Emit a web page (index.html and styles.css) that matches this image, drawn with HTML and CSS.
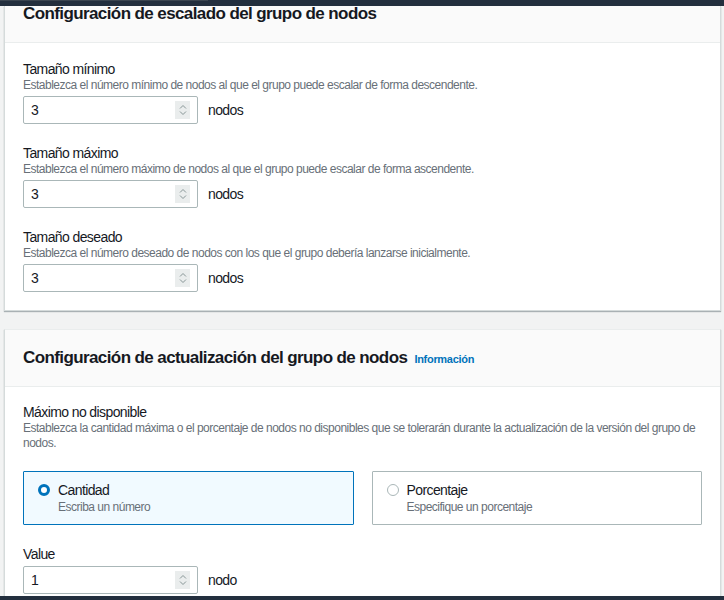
FILE: index.html
```html
<!DOCTYPE html>
<html lang="es">
<head>
<meta charset="utf-8">
<link rel="stylesheet" href="styles.css">
</head>
<body>
<div class="topbar"><div class="topbar-left"></div></div>
<main class="page">
  <section class="panel panel-first">
    <header class="panel-header">
      <h2 class="panel-title">Configuración de escalado del grupo de nodos</h2>
    </header>
    <div class="panel-body">
      <div class="field">
        <div class="label">Tamaño mínimo</div>
        <div class="desc">Establezca el número mínimo de nodos al que el grupo puede escalar de forma descendente.</div>
        <div class="input-row">
          <div class="input"><span class="value">3</span><span class="spinner"><svg width="8" height="12" viewBox="0 0 8 12"><path d="M1 4.5 L4 1.5 L7 4.5 M1 7.5 L4 10.5 L7 7.5" fill="none" stroke="#879596" stroke-width="1"/></svg></span></div>
          <span class="unit">nodos</span>
        </div>
      </div>
      <div class="field">
        <div class="label">Tamaño máximo</div>
        <div class="desc">Establezca el número máximo de nodos al que el grupo puede escalar de forma ascendente.</div>
        <div class="input-row">
          <div class="input"><span class="value">3</span><span class="spinner"><svg width="8" height="12" viewBox="0 0 8 12"><path d="M1 4.5 L4 1.5 L7 4.5 M1 7.5 L4 10.5 L7 7.5" fill="none" stroke="#879596" stroke-width="1"/></svg></span></div>
          <span class="unit">nodos</span>
        </div>
      </div>
      <div class="field">
        <div class="label">Tamaño deseado</div>
        <div class="desc">Establezca el número deseado de nodos con los que el grupo debería lanzarse inicialmente.</div>
        <div class="input-row">
          <div class="input"><span class="value">3</span><span class="spinner"><svg width="8" height="12" viewBox="0 0 8 12"><path d="M1 4.5 L4 1.5 L7 4.5 M1 7.5 L4 10.5 L7 7.5" fill="none" stroke="#879596" stroke-width="1"/></svg></span></div>
          <span class="unit">nodos</span>
        </div>
      </div>
    </div>
  </section>

  <section class="panel panel-second">
    <header class="panel-header tall">
      <h2 class="panel-title">Configuración de actualización del grupo de nodos <a class="info" href="#">Información</a></h2>
    </header>
    <div class="panel-body">
      <div class="field">
        <div class="label">Máximo no disponible</div>
        <div class="desc">Establezca la cantidad máxima o el porcentaje de nodos no disponibles que se tolerarán durante la actualización de la versión del grupo de nodos.</div>
      </div>
      <div class="tiles">
        <div class="tile selected">
          <span class="radio checked"></span>
          <div class="tile-text">
            <div class="tile-label">Cantidad</div>
            <div class="tile-desc">Escriba un número</div>
          </div>
        </div>
        <div class="tile">
          <span class="radio"></span>
          <div class="tile-text">
            <div class="tile-label">Porcentaje</div>
            <div class="tile-desc">Especifique un porcentaje</div>
          </div>
        </div>
      </div>
      <div class="field">
        <div class="label">Value</div>
        <div class="input-row">
          <div class="input"><span class="value">1</span><span class="spinner"><svg width="8" height="12" viewBox="0 0 8 12"><path d="M1 4.5 L4 1.5 L7 4.5 M1 7.5 L4 10.5 L7 7.5" fill="none" stroke="#879596" stroke-width="1"/></svg></span></div>
          <span class="unit">nodo</span>
        </div>
      </div>
    </div>
  </section>
</main>
<div class="bottombar"></div>
</body>
</html>
```

FILE: styles.css
```css
* { box-sizing: border-box; }
html, body { margin: 0; padding: 0; }
body {
  width: 724px;
  height: 600px;
  overflow: hidden;
  background: #f2f3f3;
  font-family: "Liberation Sans", Arial, sans-serif;
  color: #16191f;
  position: relative;
}
.topbar {
  height: 6px;
  background: #232f3e;
}
.topbar-left {
  width: 208px;
  height: 1px;
  background: #3b4550;
}
.page {
  padding: 0 3px 0 4px;
}
.panel {
  background: #fff;
  border: 1px solid #d5dbdb;
  border-top: none;
  box-shadow: 0 1px 1px 0 rgba(0,28,36,0.3);
}
.panel-second {
  margin-top: 18px;
  border-top: 1px solid #eaeded;
}
.panel-header {
  background: #fafafa;
  border-bottom: 1px solid #eaeded;
  height: 37px;
  padding: 0 18px;
  display: flex;
  align-items: flex-start;
}
.panel-header.tall {
  height: 57px;
  align-items: center;
}
.panel-title {
  margin: -3px 0 0;
  font-size: 17px;
  letter-spacing: -0.6px;
  font-weight: bold;
  line-height: 22px;
}
.panel-header.tall .panel-title { margin-top: 0; }
.info {
  font-size: 11px;
  letter-spacing: -0.3px;
  color: #0073bb;
  text-decoration: none;
  font-weight: bold;
  margin-left: 3px;
}
.panel-body {
  padding: 17px 18px 18px 18px;
}
.panel-second .panel-body { padding-top: 16px; }
.field + .field { margin-top: 20px; }
.label {
  font-size: 14px;
  letter-spacing: -0.6px;
  line-height: 18px;
}
.desc {
  font-size: 12px;
  letter-spacing: -0.5px;
  line-height: 15px;
  color: #687078;
}
.input-row {
  display: flex;
  align-items: center;
  margin-top: 3px;
}
.input {
  width: 175px;
  height: 28px;
  border: 1px solid #aab7b8;
  border-radius: 2px;
  display: flex;
  align-items: center;
  justify-content: space-between;
  padding: 0 7px 0 7px;
  background: #fff;
}
.value { font-size: 14px; }
.spinner {
  width: 15px;
  height: 18px;
  background: #eaeded;
  display: flex;
  align-items: center;
  justify-content: center;
}
.unit {
  font-size: 14px;
  letter-spacing: -0.6px;
  margin-left: 10px;
}
.tiles {
  display: flex;
  gap: 18px;
  margin-top: 20px;
  margin-bottom: 20px;
}
.tile {
  flex: 1;
  height: 54px;
  border: 1px solid #aab7b8;
  display: flex;
  align-items: flex-start;
  padding: 9px 14px;
  gap: 8px;
  border-radius: 1px;
}
.tile.selected {
  background: #f1faff;
  border-color: #0073bb;
}
.radio {
  width: 12px;
  height: 12px;
  border: 1px solid #aab7b8;
  border-radius: 50%;
  margin-top: 3px;
  flex: none;
}
.radio.checked {
  border: 3.5px solid #0073bb;
  background: #fff;
}
.tile-label { font-size: 14px; letter-spacing: -0.6px; line-height: 18px; }
.tile-desc { font-size: 12px; letter-spacing: -0.5px; line-height: 15px; color: #687078; margin-top: 1px; }
.bottombar {
  position: absolute;
  left: 0; right: 0; bottom: 0;
  height: 4px;
  background: #232f3e;
}
```
